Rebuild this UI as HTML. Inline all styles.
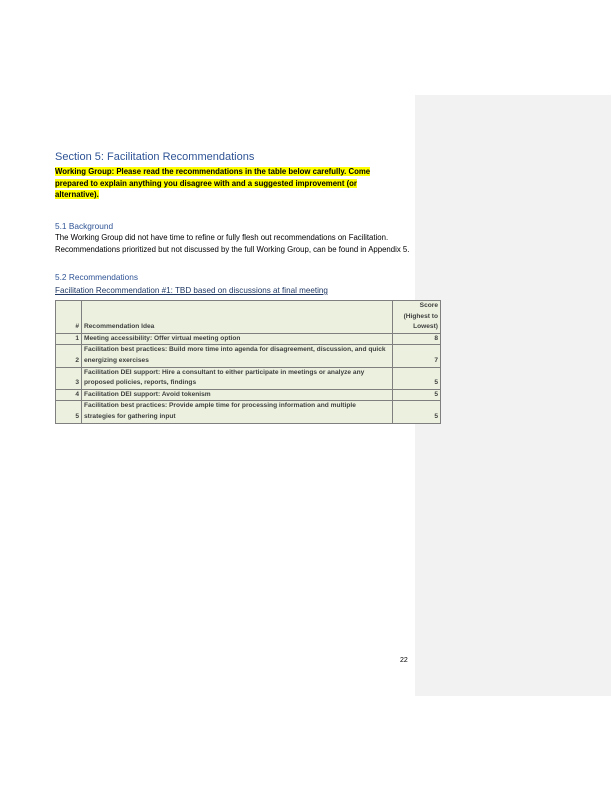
<!DOCTYPE html>
<html><head><meta charset="utf-8"><style>
body{margin:0;width:612px;height:792px;background:#fff;position:relative;font-family:"Liberation Sans",sans-serif;color:#000;overflow:hidden}
.panel{position:absolute;left:415px;top:95px;width:196px;height:601px;background:#f2f2f2}
.a{position:absolute;white-space:nowrap}
h1{position:absolute;left:55px;top:151px;margin:0;font-weight:normal;font-size:11px;color:#2f5496}
.hl{position:absolute;left:55px;top:166px;font-size:7.8px;font-weight:bold;line-height:11.5px;width:330px}
.hl span{background:#ffff00}
.h2{font-size:8.3px;color:#2f5496}
.p{font-size:7.8px;line-height:11.6px}
table{position:absolute;left:55px;top:300px;width:386px;border-collapse:collapse;font-size:6.6px;font-weight:bold;color:#404040;background:#ebf1de}
td{border:0.8px solid #7f7f7f;padding:0 2px;line-height:10.6px;vertical-align:bottom}
td.n{width:21px;text-align:right}
td.s{width:43px;text-align:right}
</style></head><body>
<div class="panel"></div>
<h1>Section 5: Facilitation Recommendations</h1>
<div class="hl"><span>Working Group: Please read the recommendations in the table below carefully. Come prepared to explain anything you disagree with and a suggested improvement (or alternative).</span></div>
<div class="a h2" style="left:55px;top:221px">5.1 Background</div>
<div class="a p" style="left:55px;top:232px">The Working Group did not have time to refine or fully flesh out recommendations on Facilitation.<br>Recommendations prioritized but not discussed by the full Working Group, can be found in Appendix 5.</div>
<div class="a h2" style="left:55px;top:272px">5.2 Recommendations</div>
<div class="a p" style="left:55px;top:285px;font-size:8.1px;text-decoration:underline;color:#1f3864">Facilitation Recommendation #1: TBD based on discussions at final meeting</div>
<table>
<tr><td class="n">#</td><td>Recommendation Idea</td><td class="s">Score<br>(Highest to<br>Lowest)</td></tr>
<tr><td class="n">1</td><td>Meeting accessibility: Offer virtual meeting option</td><td class="s">8</td></tr>
<tr><td class="n">2</td><td>Facilitation best practices: Build more time into agenda for disagreement, discussion, and quick<br>energizing exercises</td><td class="s">7</td></tr>
<tr><td class="n">3</td><td>Facilitation DEI support: Hire a consultant to either participate in meetings or analyze any<br>proposed policies, reports, findings</td><td class="s">5</td></tr>
<tr><td class="n">4</td><td>Facilitation DEI support: Avoid tokenism</td><td class="s">5</td></tr>
<tr><td class="n">5</td><td>Facilitation best practices: Provide ample time for processing information and multiple<br>strategies for gathering input</td><td class="s">5</td></tr>
</table>
<div class="a" style="left:400px;top:657px;font-size:7px">22</div>
</body></html>
